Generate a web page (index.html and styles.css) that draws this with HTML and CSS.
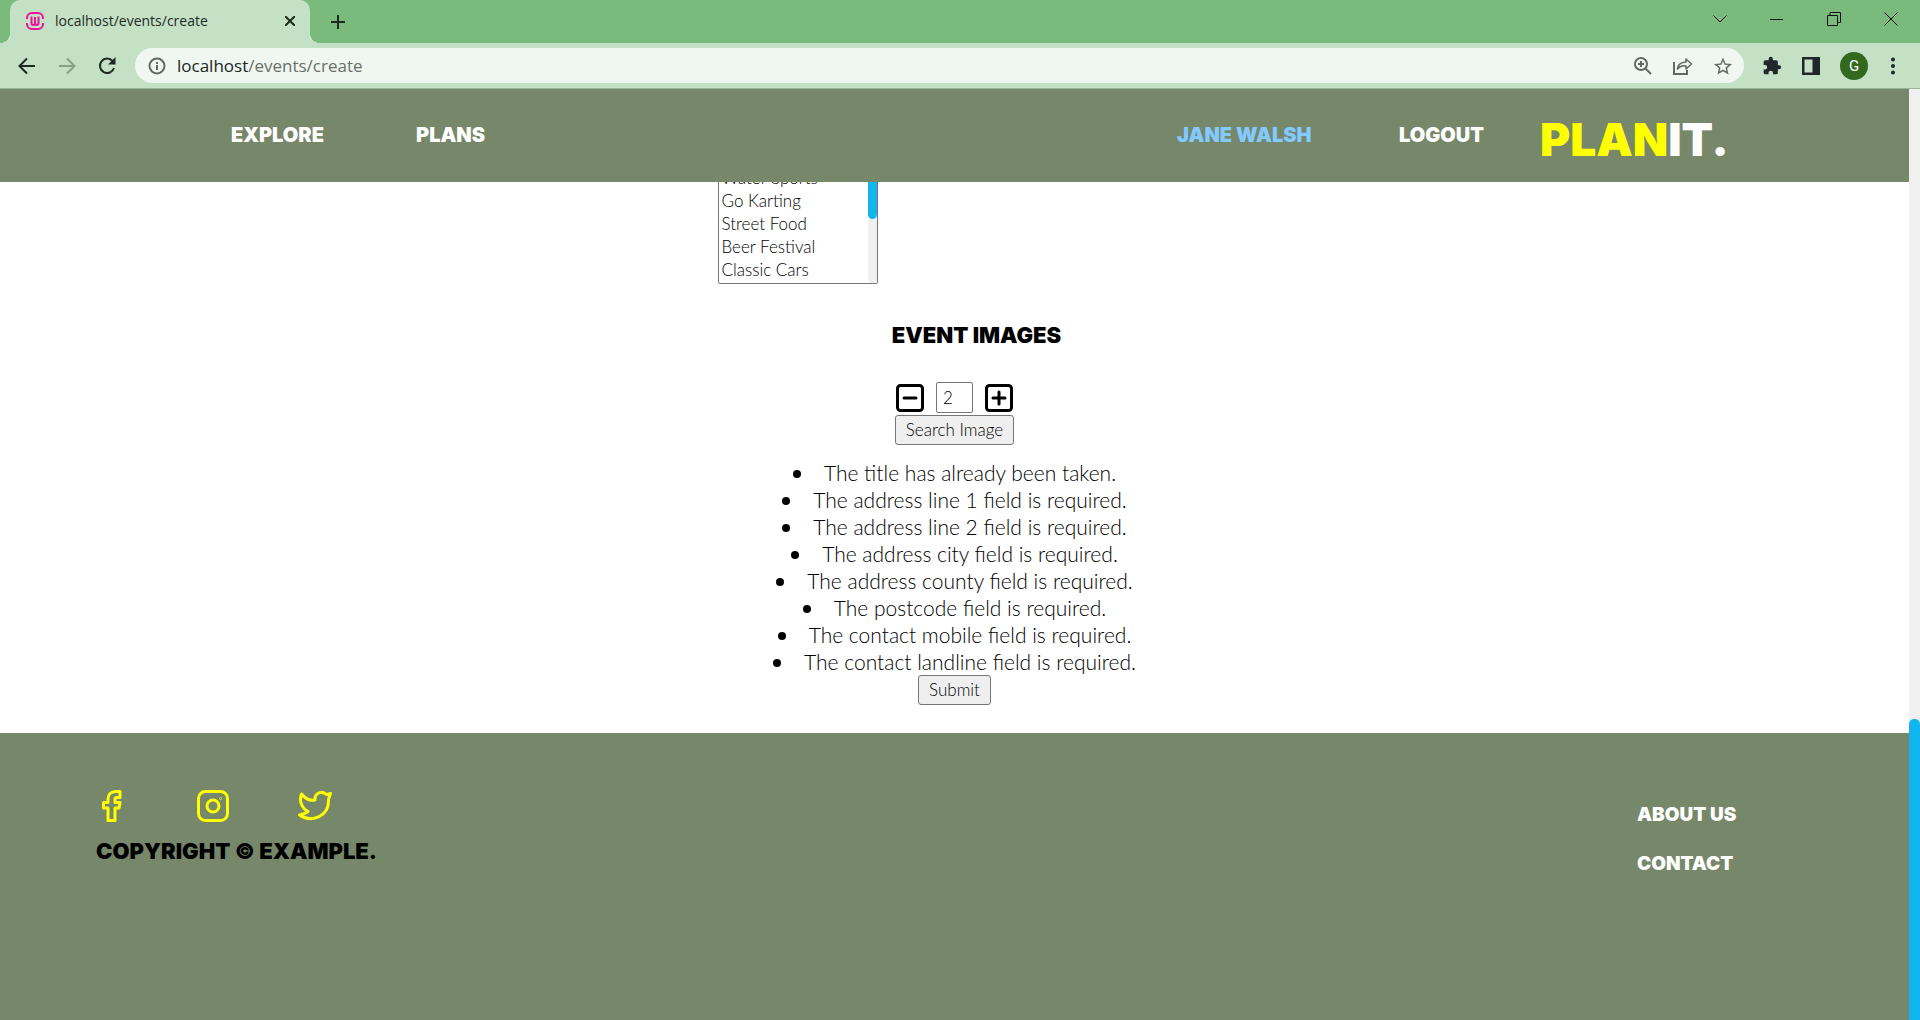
FILE: index.html
```html
<!DOCTYPE html>
<html lang="en">
<head>
<meta charset="utf-8">
<title>localhost/events/create</title>
<link rel="stylesheet" href="styles.css">
</head>
<body>
<div class="tabstrip">
  <div class="tab">
    <svg class="favicon" width="18" height="18" viewBox="0 0 18 18" fill="none" stroke="#ee1199" stroke-width="2"><path d="M1 7V6a5 5 0 0 1 5-5h6a5 5 0 0 1 5 5v1M1 11v1a5 5 0 0 0 5 5h6a5 5 0 0 0 5-5v-1"/><path d="M5.500 4.500V11q0 2 1.750 2T9 11V5v6q0 2 1.750 2t1.750-2V4.500"/></svg>
    <span class="tab-title">localhost/events/create</span>
    <button class="plain" aria-label="Close tab"><svg width="10" height="10" viewBox="0 0 10 10" stroke="#1d2a1f" stroke-width="2"><path d="M0 0l10 10M10 0L0 10"/></svg></button>
  </div>
  <button class="plain new-tab" aria-label="New tab"><svg width="16" height="16" viewBox="0 0 16 16" stroke="#1d2a1f" stroke-width="2"><path d="M8 1v14M1 8h14"/></svg></button>
  <div class="window-controls">
    <button class="plain" aria-label="Search tabs"><svg width="14" height="14" viewBox="0 0 14 14" fill="none" stroke="#111"><path d="M.5 3.500l6.500 6.500 6.500-6.500"/></svg></button>
    <button class="plain" aria-label="Minimize"><svg width="14" height="14" viewBox="0 0 14 14" stroke="#111"><path d="M0 7.500h13"/></svg></button>
    <button class="plain" aria-label="Restore"><svg width="14" height="14" viewBox="0 0 14 14" fill="none" stroke="#111"><path d="M.5 3.500h10v10H.5zM3 3.500v-3h10.500v10H11"/></svg></button>
    <button class="plain" aria-label="Close"><svg width="14" height="14" viewBox="0 0 14 14" stroke="#111"><path d="M.5.5l13 13M13.500.5l-13 13"/></svg></button>
  </div>
</div>
<div class="toolbar">
  <button class="plain" aria-label="Back"><svg width="18" height="18" viewBox="0 0 18 18" fill="none" stroke="#1d2a1f" stroke-width="2"><path d="M17 9H2M9 1.500L1.500 9 9 16.500"/></svg></button>
  <button class="plain" aria-label="Forward"><svg width="18" height="18" viewBox="0 0 18 18" fill="none" stroke="#84a286" stroke-width="2"><path d="M1 9h15M9 1.500L16.500 9 9 16.500"/></svg></button>
  <button class="plain" aria-label="Reload"><svg width="18" height="18" viewBox="0 0 18 18" fill="none" stroke="#1d2a1f" stroke-width="2"><path d="M16 11a7.200 7.200 0 1 1-1.500-7"/><path d="M17.500 0v7.500H10z" fill="#1d2a1f" stroke="none"/></svg></button>
  <div class="omnibox">
    <svg width="18" height="18" viewBox="0 0 18 18" fill="none" stroke="#5f6b62" stroke-width="2"><circle cx="9" cy="9" r="7.500"/><path d="M9 8v5M9 5v2"/></svg>
    <span class="url">localhost<span class="path">/events/create</span></span>
    <svg width="18" height="18" viewBox="0 0 18 18" fill="none" stroke="#5f6b62" stroke-width="2"><circle cx="7" cy="7" r="6"/><path d="M11.500 11.500l5.500 5.500M7 4v6M4 7h6"/></svg>
    <svg width="20" height="18" viewBox="0 0 20 18" fill="none" stroke="#5f6b62" stroke-width="2" stroke-linejoin="round"><path d="M1 5v12h13v-4" stroke-linejoin="miter"/><path d="M13 2l5.500 5-5.500 5V9Q8 8 4.500 12 5 5.500 13 5z" stroke-width="1.600"/></svg>
    <svg width="18" height="18" viewBox="0 0 24 24" fill="#5f6b62"><path d="M24 9.200l-8.600-.7L12 .5 8.600 8.500 0 9.200l6.500 5.700L4.600 23.400 12 18.900l7.400 4.500-1.900-8.500zM12 16.600l-4.500 2.700 1.200-5.100-4-3.500 5.200-.4L12 5.400l2.100 4.900 5.200.4-4 3.500 1.200 5.100z"/></svg>
  </div>
  <div class="extensions">
    <svg width="20" height="20" viewBox="0 0 24 24" fill="#20262a"><path d="M20.500 11H19V7a2 2 0 0 0-2-2h-4V3.500a2.500 2.500 0 0 0-5 0V5H4a2 2 0 0 0-2 2v3.800h1.500a2.700 2.700 0 0 1 0 5.400H2V20a2 2 0 0 0 2 2h3.800v-1.500a2.700 2.700 0 0 1 5.400 0V22H17a2 2 0 0 0 2-2v-4h1.500a2.500 2.500 0 0 0 0-5z"/></svg>
    <svg width="18" height="18" viewBox="0 0 18 18"><path fill="#20262a" fill-rule="evenodd" d="M0 0h18v18H0zM2.500 2.500v13h8v-13z"/></svg>
    <span class="avatar">G</span>
    <svg width="4" height="18" viewBox="0 0 4 18" fill="#20262a"><circle cx="2" cy="2.500" r="2"/><circle cx="2" cy="9" r="2"/><circle cx="2" cy="15.500" r="2"/></svg>
  </div>
</div>
<div class="viewport">
  <div class="page">
    <header class="site-header">
      <a href="#">EXPLORE</a>
      <a href="#">PLANS</a>
      <a href="#" class="user">JANE WALSH</a>
      <a href="#">LOGOUT</a>
      <a href="#" class="logo"><span>PLAN</span>IT.</a>
    </header>
    <main class="content">
      <div class="listbox">
        <select multiple size="5" aria-label="Category">
          <option>Water Sports</option>
          <option>Go Karting</option>
          <option>Street Food</option>
          <option>Beer Festival</option>
          <option>Classic Cars</option>
        </select>
        <div class="list-track"><div class="list-thumb"></div></div>
      </div>
      <h2>EVENT IMAGES</h2>
      <div class="counter">
        <button type="button" class="plain" aria-label="Fewer"><svg width="28" height="28" viewBox="0 0 28 28" fill="none" stroke="#000" stroke-width="3" stroke-linecap="round"><rect x="1.500" y="1.500" width="25" height="25" rx="3"/><path d="M8 14h12"/></svg></button>
        <input type="text" value="2" aria-label="Number of images">
        <button type="button" class="plain" aria-label="More"><svg width="28" height="28" viewBox="0 0 28 28" fill="none" stroke="#000" stroke-width="3" stroke-linecap="round"><rect x="1.500" y="1.500" width="25" height="25" rx="3"/><path d="M8 14h12M14 8v12"/></svg></button>
      </div>
      <button type="button" class="btn">Search Image</button>
      <ul class="errors">
        <li>The title has already been taken.</li>
        <li>The address line 1 field is required.</li>
        <li>The address line 2 field is required.</li>
        <li>The address city field is required.</li>
        <li>The address county field is required.</li>
        <li>The postcode field is required.</li>
        <li>The contact mobile field is required.</li>
        <li>The contact landline field is required.</li>
      </ul>
      <button type="submit" class="btn">Submit</button>
    </main>
    <footer class="site-footer">
      <div>
        <div class="social">
          <a href="#" aria-label="Facebook"><svg width="32" height="32" viewBox="0 0 32 32"><path d="M24 1.500h-4.500C15 1.500 12 4.500 12 9v3.500H7.500V18H12v12.500h7V18h4l1-5.500h-5V9q0-1.500 1.500-1.500H24z"/></svg></a>
          <a href="#" aria-label="Instagram"><svg width="32" height="32" viewBox="0 0 32 32"><rect x="1.500" y="1.500" width="29" height="29" rx="7"/><circle cx="16" cy="16" r="6"/><circle cx="23.500" cy="8.500" r=".3" stroke-width="2"/></svg></a>
          <a href="#" aria-label="Twitter"><svg width="34" height="32" viewBox="0 0 34 32"><path d="M32.500 3.500Q30 4.500 28.500 4.500C24.500.5 16.500 2.500 17 10 11 11 6.500 8 3.500 4 1.500 9 2 17 10 21.500 7 24 4.500 24.500 1.500 25 13 33 31 27 30.500 10 30.500 8 31.500 7 32.500 3.500z"/></svg></a>
        </div>
        <p class="copyright">COPYRIGHT © EXAMPLE.</p>
      </div>
      <nav class="footer-links">
        <a href="#">ABOUT US</a>
        <a href="#">CONTACT</a>
      </nav>
    </footer>
  </div>
  <div class="page-track"><div class="page-thumb"></div></div>
</div>
</body>
</html>
```

FILE: styles.css
```css
* { box-sizing: border-box; }
body {
  margin: 0;
  height: 100vh;
  display: flex;
  flex-direction: column;
  overflow: hidden;
  font: 300 21px/27px Lato, sans-serif;
  color: #000;
  background: #fff;
}
svg { display: block; flex: none; }
a { text-decoration: none; }
.plain { border: 0; padding: 0; background: none; display: block; }

/* browser frame */
.tabstrip {
  flex: none;
  height: 43px;
  padding-left: 10px;
  display: flex;
  align-items: center;
  background: #7abb7d;
  font: 400 14px/20px "Open Sans", sans-serif;
}
.tab {
  position: relative;
  width: 300px;
  height: 43px;
  padding: 0 15px 2px 16px;
  display: flex;
  align-items: center;
  gap: 11px;
  border-radius: 10px 10px 0 0;
  background: #c5e1c5;
  color: #1d2a1f;
}
.tab::before, .tab::after {
  content: "";
  position: absolute;
  bottom: 0;
  width: 10px;
  height: 10px;
}
.tab::before { right: 100%; background: radial-gradient(circle at 0 0, #7abb7d 10px, #c5e1c5 10px); }
.tab::after { left: 100%; background: radial-gradient(circle at 100% 0, #7abb7d 10px, #c5e1c5 10px); }
.tab-title { flex: 1; }
.new-tab { margin-left: 20px; }
.window-controls { margin: 0 22px 6px auto; display: flex; gap: 43px; }
.toolbar {
  flex: none;
  height: 46px;
  padding: 0 25px 0 18px;
  display: flex;
  align-items: center;
  gap: 22px;
  background: #c5e1c5;
  border-bottom: 1px solid #99b499;
}
.omnibox {
  flex: 1;
  height: 35px;
  margin-left: -3px;
  padding: 0 12px 0 13px;
  display: flex;
  align-items: center;
  gap: 21px;
  border-radius: 18px;
  background: #f0f7f0;
  font: 400 17px/24px "Open Sans", sans-serif;
}
.url { flex: 1; margin-left: -10px; color: #202622; }
.path { color: #69716b; }
.extensions { display: flex; align-items: center; gap: 20px; margin-left: -4px; }
.avatar {
  width: 28px;
  height: 28px;
  margin-right: 3px;
  border-radius: 50%;
  background: #33691e;
  color: #fff;
  font: 400 15px/28px Roboto, sans-serif;
  text-align: center;
}

/* page */
.viewport { flex: 1; min-height: 0; display: flex; }
.page { flex: 1; display: flex; flex-direction: column; }
.page-track { width: 11px; background: #f0f0f0; display: flex; align-items: flex-end; }
.page-thumb { width: 100%; height: 301px; border-radius: 5px 5px 0 0; background: #12b5ee; }
.site-header {
  flex: none;
  height: 93px;
  padding: 0 0 2px 231px;
  display: grid;
  grid-template-columns: 185px 1fr 222px 141px 369px;
  align-items: center;
  background: #76876a;
  font: 900 20px/24px Inter, sans-serif;
}
.site-header a { color: #fff; }
.site-header .user { color: #82caff; }
.site-header .logo { padding-top: 8px; font-size: 46px; line-height: 48px; }
.logo span { color: #ff0; }
.content {
  flex: 1;
  min-height: 0;
  overflow: hidden;
  padding-bottom: 28px;
  display: flex;
  flex-direction: column;
  align-items: center;
  justify-content: flex-end;
}
.listbox { position: relative; flex: none; width: 160px; margin-right: 314px; }
select {
  display: block;
  width: 100%;
  height: 118px;
  padding: 0;
  border: 1px solid #767676;
  border-radius: 2px;
  background: #fff;
  color: #000;
  font: 300 17px/23px Lato, sans-serif;
  overflow: hidden;
}
option { height: 23px; min-height: 23px; padding: 0 3px; font: 300 17px/23px Lato, sans-serif; }
.list-track { position: absolute; top: 1px; right: 1px; bottom: 1px; width: 9px; border-radius: 5px; background: #f0f0f0; }
.list-thumb { height: 52px; border-radius: 0 0 5px 5px; background: #12b5ee; }
h2 { margin: 37px 0 33px 44px; font: 900 22px/28px Inter, sans-serif; }
.counter { display: flex; align-items: center; gap: 12px; margin-bottom: 2px; }
.counter input {
  width: 37px;
  height: 31px;
  padding: 1px 6px;
  border: 1px solid #767676;
  border-radius: 2px;
  color: #000;
  font: 300 17px/24px Lato, sans-serif;
}
.btn {
  flex: none;
  height: 30px;
  padding: 0 10px;
  border: 1px solid #767676;
  border-radius: 3px;
  background: #efefef;
  color: #000;
  font: 300 17px/24px Lato, sans-serif;
}
.errors { margin: 14px 0 0; padding: 0; list-style: none; text-align: center; }
.errors li::before {
  content: "";
  display: inline-block;
  width: 8px;
  height: 8px;
  margin-right: 23px;
  border-radius: 50%;
  background: #000;
  vertical-align: 3px;
}
.site-footer {
  flex: none;
  height: 287px;
  padding: 57px 0 0 96px;
  display: grid;
  grid-template-columns: 1fr 272px;
  background: #76876a;
}
.social { display: flex; gap: 69px; }
.social svg { fill: none; stroke: #ff0; stroke-width: 3; stroke-linejoin: round; }
.copyright { margin: 15px 0 0; font: 900 22px/28px Inter, sans-serif; }
.footer-links { padding-top: 13px; display: flex; flex-direction: column; gap: 25px; font: 900 19px/24px Inter, sans-serif; }
.footer-links a { color: #fff; }
```
